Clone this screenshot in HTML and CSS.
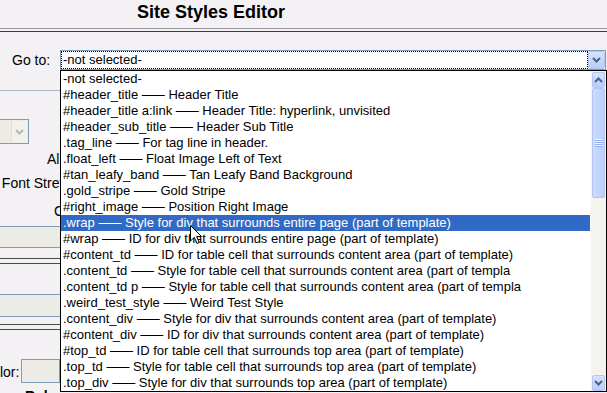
FILE: index.html
```html
<!DOCTYPE html>
<html lang="en">

<head>
    <meta charset="UTF-8">
    <meta name="viewport" content="width=device-width, initial-scale=1.0">
    <title>Site Styles Editor</title>

    <link rel="stylesheet" href="styles.css">
</head>

<body>
    <div class="header">
        <h1>Site Styles Editor</h1>
        <div class="rule"></div>
    </div>

    <div class="goto">
        <label class="goto-label">Go to:</label>
        <div class="combo">
            <div class="combo-text"><span>-not selected-</span></div>
            <div class="combo-btn">
                <svg width="9" height="6" viewBox="0 0 9 6"><path d="M1 1 L4.5 4.5 L8 1" fill="none" stroke="#4d6185" stroke-width="2"/></svg>
            </div>
        </div>
    </div>

    <!-- form behind the open list -->
    <div class="editor">
        <div class="row-select">
            <div class="dis-select">
                <div class="dis-btn">
                    <svg width="9" height="6" viewBox="0 0 9 6"><path d="M1 1 L4.5 4.5 L8 1" fill="none" stroke="#b9b8b0" stroke-width="2"/></svg>
                </div>
            </div>
        </div>
        <div class="field label-a">Align:</div>
        <div class="field label-b">Font Stretch:</div>
        <div class="field label-c">Clip:</div>
        <div class="box box-a"></div>
        <div class="double dbl-a"></div>
        <div class="box box-b"></div>
        <div class="double dbl-b"></div>
        <div class="color-row">
            <span class="color-label">Color:</span>
            <div class="color-input"></div>
        </div>
        <div class="bottom-row">Rules</div>
    </div>

    <div class="droplist">
        <ul class="options">
            <li>-not selected-</li>
            <li>#header_title <span class="sep">——</span> Header Title</li>
            <li>#header_title a:link <span class="sep">——</span> Header Title: hyperlink, unvisited</li>
            <li>#header_sub_title <span class="sep">——</span> Header Sub Title</li>
            <li>.tag_line <span class="sep">——</span> For tag line in header.</li>
            <li>.float_left <span class="sep">——</span> Float Image Left of Text</li>
            <li>#tan_leafy_band <span class="sep">——</span> Tan Leafy Band Background</li>
            <li>.gold_stripe <span class="sep">——</span> Gold Stripe</li>
            <li>#right_image <span class="sep">——</span> Position Right Image</li>
            <li class="selected">.wrap <span class="sep">——</span> Style for div that surrounds entire page (part of template)</li>
            <li>#wrap <span class="sep">——</span> ID for div that surrounds entire page (part of template)</li>
            <li>#content_td <span class="sep">——</span> ID for table cell that surrounds content area (part of template)</li>
            <li>.content_td <span class="sep">——</span> Style for table cell that surrounds content area (part of templa</li>
            <li>.content_td p <span class="sep">——</span> Style for table cell that surrounds content area (part of templa</li>
            <li>.weird_test_style <span class="sep">——</span> Weird Test Style</li>
            <li>.content_div <span class="sep">——</span> Style for div that surrounds content area (part of template)</li>
            <li>#content_div <span class="sep">——</span> ID for div that surrounds content area (part of template)</li>
            <li>#top_td <span class="sep">——</span> ID for table cell that surrounds top area (part of template)</li>
            <li>.top_td <span class="sep">——</span> Style for table cell that surrounds top area (part of template)</li>
            <li>.top_div <span class="sep">——</span> Style for div that surrounds top area (part of template)</li>
        </ul>
        <div class="scrollbar">
            <div class="sb-btn">
                <svg width="9" height="6" viewBox="0 0 9 6"><path d="M1 5 L4.5 1.5 L8 5" fill="none" stroke="#4d6185" stroke-width="2"/></svg>
            </div>
            <div class="sb-thumb"><span class="grip"></span></div>
            <div class="sb-track"></div>
            <div class="sb-btn">
                <svg width="9" height="6" viewBox="0 0 9 6"><path d="M1 1 L4.5 4.5 L8 1" fill="none" stroke="#4d6185" stroke-width="2"/></svg>
            </div>
        </div>
    </div>

    <svg class="cursor" width="13" height="20" viewBox="0 0 13 20">
        <path d="M0.5 0.5 L0.5 16 L4.3 12.3 L7 18.5 L9.2 17.5 L6.6 11.5 L11.5 11.5 Z" fill="#fff" stroke="#000" stroke-width="1"/>
    </svg>
</body>

</html>
```

FILE: styles.css
```css
body {
    margin: 0;
    background: #f3f1f3;
    font-family: "Liberation Sans", Arial, sans-serif;
    font-size: 14px;
    color: #000;
    overflow: hidden;
}

h1 {
    margin: 0;
    padding: 1px 0 0 137px;
    font-size: 18px;
    line-height: 22px;
}

.rule {
    margin-top: 5px;
    height: 2px;
    border-top: 1px solid #9c9a9c;
    border-bottom: 1px solid #3c3c3c;
}

.goto {
    display: flex;
    margin: 18px 1px 0 12px;
}

.goto-label {
    width: 48px;
    line-height: 20px;
}

.combo {
    flex: 1;
    display: flex;
    height: 20px;
    box-sizing: border-box;
    border: 1px solid #7f9db9;
    background: #fff;
}

.combo-text {
    flex: 1;
    border: 1px dotted #000;
    font-size: 13px;
    line-height: 16px;
    padding-left: 1px;
}

.combo-btn,
.sb-btn {
    display: flex;
    align-items: center;
    justify-content: center;
    box-sizing: border-box;
    border: 1px solid #b4c7f3;
    border-radius: 2px;
    background: linear-gradient(#d6e2fd, #b9cdfa);
}

.combo-btn {
    width: 17px;
}

/* background form, only its left edge shows */
.editor {
    width: 60px;
    overflow: hidden;
    margin-top: 20px;
    border-top: 1px solid #a5b4cb;
}

.row-select {
    margin-top: 28px;
    height: 25px;
}

.dis-select {
    margin-left: -41px;
    width: 70px;
    height: 25px;
    box-sizing: border-box;
    border: 1px solid #7f9db9;
    background: #ecebe5;
    display: flex;
    justify-content: flex-end;
    padding: 1px;
}

.dis-btn {
    width: 15px;
    display: flex;
    align-items: center;
    justify-content: center;
    background: #f2f1ec;
    border-left: 1px solid #e0ded6;
}

.field {
    width: 82px;
    text-align: right;
    white-space: nowrap;
    line-height: 16px;
}

.label-a {
    margin-top: 7px;
}

.label-b {
    margin-top: 8px;
}

.label-c {
    margin-top: 12px;
}

.box {
    box-sizing: border-box;
    border-top: 1px solid #7f9db9;
    border-bottom: 1px solid #7f9db9;
    background: #ecebe5;
}

.box-a {
    margin-top: 7px;
    height: 22px;
}

.box-b {
    margin-top: 30px;
    height: 23px;
}

.double {
    height: 6px;
    box-sizing: border-box;
    border-top: 1px solid #4a4a4a;
    border-bottom: 1px solid #4a4a4a;
}

.dbl-a {
    margin-top: 10px;
}

.dbl-b {
    margin-top: 7px;
}

.color-row {
    display: flex;
    margin-top: 29px;
    margin-left: -18px;
}

.color-label {
    width: 42px;
    text-align: right;
    padding-top: 5px;
    line-height: 16px;
}

.color-input {
    width: 60px;
    height: 24px;
    margin-left: 2px;
    box-sizing: border-box;
    border: 1px solid #7f9db9;
    background: #ecebe5;
}

.bottom-row {
    margin-top: 5px;
    padding-left: 25px;
    font-weight: bold;
    line-height: 16px;
}

/* open dropdown list */
.droplist {
    position: absolute;
    left: 60px;
    top: 70px;
    width: 547px;
    height: 322px;
    box-sizing: border-box;
    border: 1px solid #000;
    background: #fff;
    display: flex;
}

.options {
    flex: 1;
    margin: 0;
    padding: 0;
    list-style: none;
    font-size: 13px;
}

.options li {
    height: 16px;
    line-height: 16px;
    padding-left: 2px;
    white-space: nowrap;
    overflow: hidden;
}

.options li.selected {
    background: #316ac5;
    color: #fff;
}

.sep {
    letter-spacing: -3px;
    padding-right: 3px;
}

.scrollbar {
    width: 16px;
    box-sizing: border-box;
    padding: 1px 1px 0;
    display: flex;
    flex-direction: column;
    background: #f4f3ee;
    border-left: 1px solid #fcfcfa;
}

.sb-btn {
    height: 16px;
}

.sb-thumb {
    height: 110px;
    box-sizing: border-box;
    border: 1px solid #b2c5f0;
    border-radius: 2px;
    background: linear-gradient(to right, #cddbfd, #bccffb);
    display: flex;
    align-items: center;
    justify-content: center;
}

.grip {
    width: 7px;
    height: 8px;
    background: repeating-linear-gradient(#eef3fe 0 1px, #8fb0f1 1px 2px);
}

.sb-track {
    flex: 1;
}

.cursor {
    position: absolute;
    left: 190px;
    top: 225px;
}
```
